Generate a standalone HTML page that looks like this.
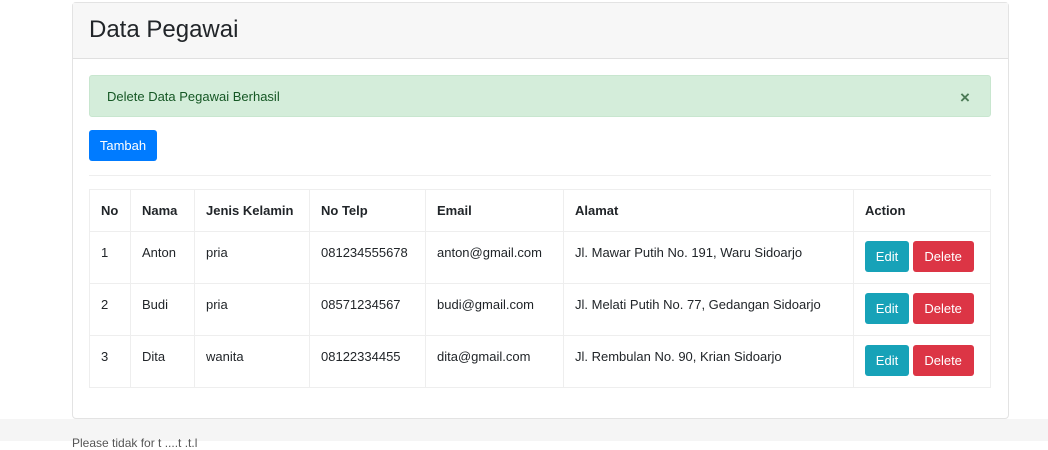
<!DOCTYPE html>
<html><head><style>
*{margin:0;padding:0;box-sizing:border-box}
body{width:1048px;height:441px;background:#fff;font-family:"Liberation Sans",sans-serif;position:relative;overflow:hidden;color:#212529}
.a{position:absolute}
.card{left:72px;top:2px;width:937px;height:417px;border:1px solid #e3e3e3;border-radius:4px;background:#fff}
.hd{left:73px;top:3px;width:935px;height:56px;background:#f7f7f7;border-bottom:1px solid #e0e0e0}
table{position:absolute;left:89px;top:189px;width:902px;border-collapse:collapse;font-size:13px}
td,th{border:1px solid #eeeeee;text-align:left;padding:0 11px;vertical-align:middle}
th{height:42px;font-weight:bold}
td{height:52px;vertical-align:top;padding-top:13px;line-height:15px}
td.act{padding-top:9px;line-height:normal}
.b{display:inline-block;color:#fff;border-radius:3px;height:31px;line-height:31px;font-size:13px;text-align:center}
</style></head><body>
<div class="a card"></div>
<div class="a hd"></div>
<div class="a" style="left:89px;top:16px;font-size:24px;color:#212529">Data Pegawai</div>
<div class="a" style="left:89px;top:75px;width:902px;height:42px;background:#d4edda;border-radius:3px;border:1px solid #c8e6cf"></div>
<div class="a" style="left:107px;top:89px;font-size:13px;color:#155724">Delete Data Pegawai Berhasil</div>
<div class="a" style="left:960px;top:88px;font-size:17px;color:#4c7a56;font-weight:bold">×</div>
<div class="a b" style="left:89px;top:130px;width:68px;background:#007bff">Tambah</div>
<div class="a" style="left:89px;top:175px;width:902px;height:1px;background:#eee"></div>
<table>
<tr><th style="width:41px">No</th><th style="width:64px">Nama</th><th style="width:115px">Jenis Kelamin</th><th style="width:116px">No Telp</th><th style="width:138px">Email</th><th style="width:290px">Alamat</th><th>Action</th></tr>
<tr><td>1</td><td>Anton</td><td>pria</td><td>081234555678</td><td>anton@gmail.com</td><td>Jl. Mawar Putih No. 191, Waru Sidoarjo</td><td class="act"><span class="b" style="width:44px;background:#17a2b8">Edit</span> <span class="b" style="width:61px;background:#dc3545">Delete</span></td></tr>
<tr><td>2</td><td>Budi</td><td>pria</td><td>08571234567</td><td>budi@gmail.com</td><td>Jl. Melati Putih No. 77, Gedangan Sidoarjo</td><td class="act"><span class="b" style="width:44px;background:#17a2b8">Edit</span> <span class="b" style="width:61px;background:#dc3545">Delete</span></td></tr>
<tr><td>3</td><td>Dita</td><td>wanita</td><td>08122334455</td><td>dita@gmail.com</td><td>Jl. Rembulan No. 90, Krian Sidoarjo</td><td class="act"><span class="b" style="width:44px;background:#17a2b8">Edit</span> <span class="b" style="width:61px;background:#dc3545">Delete</span></td></tr>
</table>
<div class="a" style="left:0;top:419px;width:1048px;height:22px;background:#f5f5f5"></div>
<div class="a" style="left:72px;top:436px;font-size:12px;color:#555">Please tidak for t ....t .t.l</div>
</body></html>
